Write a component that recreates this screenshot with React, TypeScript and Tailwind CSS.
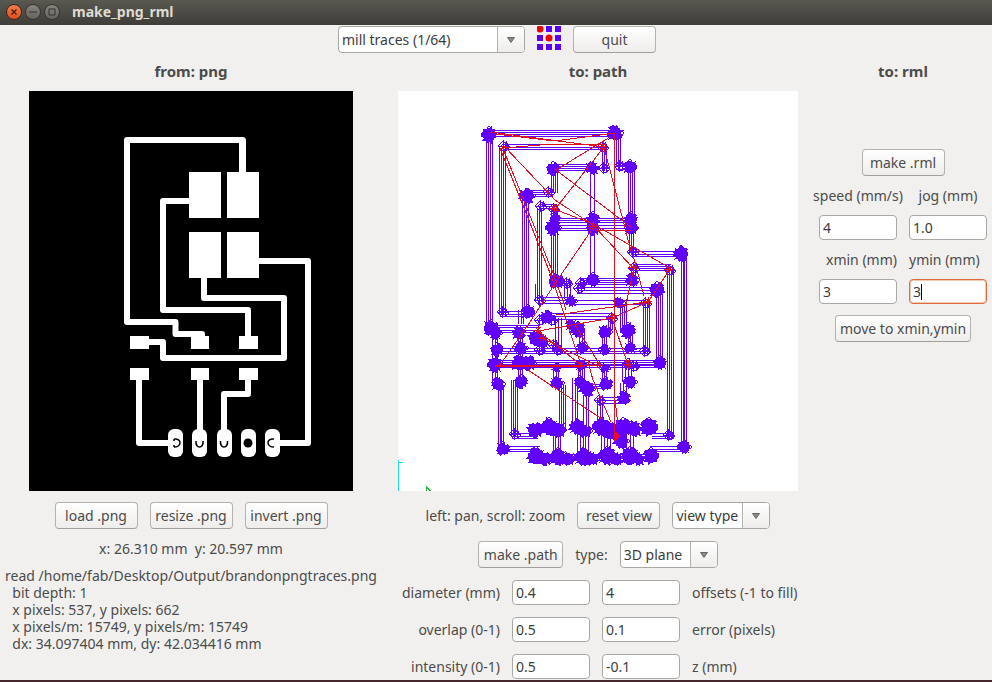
import React from "react";

type Bundle = [number, number, number, number, number];

/* vertical toolpath bundles: x start, x end, y start, y end, passes */
const vertical: Bundle[] = [
  [486.5, 492.5, 137, 325, 4], [499.5, 505.5, 148, 314, 4], [522.5, 528.5, 198, 310, 4],
  [537.5, 541.5, 208, 300, 3], [551.5, 557.5, 170, 193, 4], [551.5, 557.5, 208, 280, 4],
  [590.5, 594.5, 170, 280, 2], [628.5, 634.5, 168, 225, 4], [629.5, 633.5, 228, 255, 3],
  [614.5, 620.5, 135, 166, 4], [602.5, 606.5, 148, 171, 3], [681.5, 686.5, 255, 447, 4],
  [667.5, 673.5, 270, 438, 4], [656.5, 662.5, 290, 362, 4], [564.5, 570.5, 284, 299, 3],
  [643.5, 649.5, 300, 353, 4], [620.5, 626.5, 304, 330, 4], [608.5, 612.5, 318, 330, 3],
  [579.5, 584.5, 330, 348, 3], [602.5, 606.5, 330, 350, 3], [628.5, 632.5, 330, 346, 3],
  [492.5, 497.5, 325, 384, 3], [518.5, 523.5, 310, 324, 3], [518.5, 522.5, 335, 384, 3],
  [498.5, 503.5, 385, 448, 4], [511.5, 517.5, 380, 436, 4], [559.5, 565.5, 385, 430, 4],
  [572.5, 577.5, 378, 425, 3], [583.5, 588.5, 395, 432, 3], [597.5, 602.5, 398, 425, 3],
  [553.5, 558.5, 365, 382, 3], [578.5, 584.5, 365, 382, 4], [602.5, 606.5, 365, 385, 3],
  [622.5, 631.5, 363, 382, 4], [620.5, 626.5, 383, 396, 3], [631.5, 635.5, 264, 282, 3],
  [553.5, 560.5, 430, 455, 4], [577.5, 588.5, 430, 455, 5], [601.5, 610.5, 430, 455, 4],
  [626.5, 633.5, 430, 455, 3], [535.5, 541.5, 284, 302, 2], [555.5, 561.5, 318, 350, 3],
];

/* horizontal toolpath bundles: y start, y end, x start, x end, passes */
const horizontal: Bundle[] = [
  [130.5, 136.5, 489, 615, 4], [144.5, 149.5, 504, 604, 3], [164.5, 170.5, 554, 592, 4],
  [190.5, 196.5, 527, 553, 4], [204.5, 208.5, 541, 557, 3], [218.5, 222.5, 555, 632, 3],
  [225.5, 230.5, 555, 632, 3], [251.5, 256.5, 632, 682, 3], [264.5, 270.5, 633, 671, 4],
  [278.5, 284.5, 580, 632, 4], [287.5, 293.5, 577, 657, 3], [297.5, 303.5, 538, 572, 3],
  [300.5, 304.5, 572, 646, 2], [311.5, 316.5, 500, 530, 3], [313.5, 319.5, 550, 613, 3],
  [325.5, 332.5, 491, 540, 4], [348.5, 353.5, 495, 647, 3], [360.5, 367.5, 492, 660, 5],
  [397.5, 403.5, 600, 625, 3], [433.5, 438.5, 512, 538, 3], [446.5, 451.5, 503, 540, 3],
  [433.5, 438.5, 652, 674, 3], [446.5, 451.5, 650, 685, 3], [163.5, 169.5, 616, 630, 3],
  [384.5, 388.5, 586, 606, 3], [281.5, 285.5, 556, 572, 3], [454.5, 460.5, 532, 655, 4],
];

/* solid corners where passes pile up: x, y, radius */
const corners: [number, number, number][] = [
  [489, 135, 7], [615, 133, 7], [553, 169, 6], [592, 168, 6], [630, 167, 6], [527, 196, 7],
  [555, 219, 5], [553, 228, 7], [593, 219, 6], [593, 229, 6], [631, 219, 6], [631, 228, 6],
  [681, 254, 7], [556, 281, 7], [593, 280, 6], [632, 280, 6], [657, 290, 7], [571, 301, 5],
  [528, 312, 6], [547, 317, 6], [491, 328, 7], [495, 333, 6], [519, 333, 6], [536, 338, 7],
  [543, 343, 5], [571, 325, 5], [578, 330, 7], [605, 332, 6], [628, 331, 7], [619, 303, 5],
  [497, 350, 6], [521, 348, 6], [582, 348, 5], [605, 349, 4], [630, 348, 5], [495, 365, 7],
  [519, 363, 7], [528, 363, 7], [660, 363, 6], [581, 365, 5], [557, 368, 4], [605, 368, 4],
  [628, 364, 4], [498, 384, 6], [521, 382, 6], [557, 383, 6], [580, 382, 5], [587, 389, 7],
  [606, 384, 6], [630, 382, 6], [624, 398, 6], [535, 430, 7], [549, 427, 8], [558, 430, 7],
  [577, 427, 7], [585, 431, 6], [601, 427, 8], [611, 431, 8], [623, 427, 8], [634, 429, 7],
  [649, 427, 8], [621, 441, 7], [503, 449, 6], [684, 447, 6], [536, 456, 8], [545, 459, 6],
  [558, 457, 8], [568, 459, 6], [583, 457, 8], [592, 459, 6], [607, 456, 8], [616, 459, 6],
  [630, 456, 8], [638, 459, 6], [651, 456, 7],
];

const tips: [number, number][] = [
  [504, 146], [603, 147], [604, 168], [549, 192], [541, 206], [554, 209], [633, 252],
  [634, 268], [670, 270], [567, 283], [581, 283], [579, 288], [540, 300], [503, 312],
  [540, 320], [552, 320], [554, 345], [558, 350], [540, 350], [604, 350], [645, 351],
  [646, 303], [515, 434], [669, 435], [600, 400], [612, 318], [634, 366], [620, 166],
];

const travel = [
  "490,132 604,147", "495,134 555,141 615,133", "504,148 540,145 604,144", "500,148 552,278 581,365",
  "502,146 555,278 566,310", "504,146 555,200 593,225 633,268", "604,147 556,208", "610,137 556,170",
  "556,170 632,228", "604,148 610,170 632,255", "614,135 615,440", "554,209 593,224 670,268",
  "593,228 556,282 528,325 500,365", "670,269 648,302", "633,255 644,296", "634,268 626,304",
  "648,302 612,318 538,331", "648,302 556,315", "620,306 646,302", "612,318 627,362",
  "538,331 581,365", "540,337 598,366", "495,365 583,365", "495,366 583,366", "528,370 602,419",
  "583,365 600,365", "588,362 593,380 611,422", "615,400 618,425", "575,325 600,365", "596,230 632,230",
];

const hubs: [number, number][] = [
  [603, 146], [554, 208], [593, 226], [633, 267], [669, 269], [648, 301], [612, 317],
  [538, 330], [543, 338], [581, 365], [599, 365], [628, 364],
];

const at = (a: number, b: number, n: number, i: number) => Math.floor(a + ((b - a) * i) / (n - 1)) + 0.5;

const cornerPoints = (x: number, y: number, r: number, k: number) =>
  Array.from({ length: 24 }, (_, i) => {
    const angle = (i / 24) * Math.PI * 2;
    const tooth = i % 2 ? 1 : -0.6;
    const reach = r + tooth + [0.8, 0, 0, -0.8, 0, 1.6, 0][(i + k * 3) % 7];
    return `${(x + Math.cos(angle) * reach).toFixed(1)},${(y + Math.sin(angle) * reach).toFixed(1)}`;
  }).join(" ");

function ToolPath() {
  return (
    <svg viewBox="398 91 400 400" className="block h-[400px] w-[400px] bg-white" role="img" aria-label="tool path" shapeRendering="crispEdges">
      <g stroke="#6200f5" strokeWidth="1">
        {vertical.map(([a, b, c, d, n], k) =>
          Array.from({ length: n }, (_, i) => <line key={`${k}-${i}`} x1={at(a, b, n, i)} x2={at(a, b, n, i)} y1={c} y2={d} />)
        )}
        {horizontal.map(([a, b, c, d, n], k) =>
          Array.from({ length: n }, (_, i) => <line key={`${k}-${i}`} y1={at(a, b, n, i)} y2={at(a, b, n, i)} x1={c} x2={d} />)
        )}
      </g>
      <g fill="none" stroke="#6200f5" strokeWidth="1">
        {tips.map(([x, y]) => (
          <path key={`${x}-${y}`} d={`M${x - 6} ${y}l5 -5v10zM${x - 3} ${y}l4 -4l5 5l-5 4zM${x - 1} ${y - 5}l6 6M${x - 2} ${y + 3}l6 -6M${x + 2} ${y - 5}v10M${x - 5} ${y}h10`} />
        ))}
      </g>
      <g fill="#6200ff">
        {corners.map(([x, y, r], k) => (
          <polygon key={k} points={cornerPoints(x, y, r, k)} />
        ))}
      </g>
      <g fill="none" stroke="#6200ff" strokeWidth="1">
        {corners.map(([x, y, r], k) => (
          <path key={k} d={k % 2 ? `M${x - r} ${y - r + 1}L${x + r - 1} ${y + r}M${x + r} ${y - 2}l2 2l-2 2` : `M${x - r} ${y + r - 1}L${x + r} ${y - r + 2}M${x - 2} ${y - r}l2 -2l2 2`} />
        ))}
      </g>
      <g fill="none" stroke="#e01020" strokeWidth="1">
        {travel.map((points) => <polyline key={points} points={points} />)}
        {hubs.map(([x, y]) => (
          <path key={`${x}-${y}`} d={`M${x - 5} ${y}h9M${x} ${y - 4}v8M${x - 3} ${y - 3}l6 6M${x - 3} ${y + 3}l6 -6`} />
        ))}
        <path d="M614 431l6 5l-5 5z" fill="#ff0030" />
      </g>
      <path d="M398.500 491V459.500M398 462.500h5" fill="none" stroke="#20dfe8" />
      <path d="M426.500 491v-4l4 4M427 488l3 3" fill="none" stroke="#20c040" />
    </svg>
  );
}

function Board() {
  return (
    <svg viewBox="29 91 324 400" className="block h-[400px] w-[324px] bg-black" role="img" aria-label="png traces">
      <g fill="none" stroke="#fff" strokeWidth="6" strokeLinejoin="round">
        <path strokeWidth="7" strokeLinecap="round" d="M242.500 173V140.500" />
        <path d="M242.500 140H127V322H175.500V334H202V340" />
        <path d="M190 201H163V310H248V337" />
        <path d="M258 261H308V443H276" />
        <path d="M204 277V298H284V358H163V342H148" />
        <path d="M139 379V443H170" />
        <path d="M200 379V432" />
        <path d="M248 379V394H224V432" />
      </g>
      <g fill="#fff" shapeRendering="crispEdges">
        <path d="M189 172h32v46h-32zM227 172h32v46h-32zM189 232h32v46h-32zM227 232h32v46h-32z" />
        <path d="M130 336h19v13h-19zM191 336h18v13h-18zM239 336h19v13h-19zM130 368h19v12h-19zM191 368h18v12h-18zM239 368h19v12h-19z" />
      </g>
      <g fill="#fff">
        {[168, 192, 217, 241, 265].map((x) => <rect key={x} x={x} y="429" width="15" height="28" rx="6" />)}
      </g>
      <g fill="none" stroke="#000" strokeWidth="1.500">
        <path d="M174 439c8 -1 8 8 0 8M173 440h2M173 446h2" />
        <path d="M196 441c-1 8 8 8 7 0" />
        <path d="M220.500 441c-1 8 8 8 7 0" />
        <path d="M274 439c-8 -1 -8 8 0 8" />
      </g>
      <circle cx="248" cy="443" r="4.500" />
    </svg>
  );
}

function Logo() {
  return (
    <svg viewBox="0 0 24 24" className="h-6 w-6 shrink-0" aria-label="logo" role="img">
      <path fill="#5a00f5" d="M9 0h6v6H9zM18 0h6v6h-6zM0 9h6v6H0zM18 9h6v6h-6zM0 18h6v6H0zM9 18h6v6H9zM18 18h6v6h-6z" />
      <circle cx="3" cy="3" r="3.500" fill="#f00000" />
      <circle cx="12" cy="12" r="3.500" fill="#f00000" />
    </svg>
  );
}

function Button({ children, className = "min-w-[83px]" }: { children: React.ReactNode; className?: string }) {
  return (
    <button type="button" className={`h-[27px] whitespace-nowrap rounded border border-[#b4b2ae] border-b-[#a19f9b] bg-linear-to-b from-white to-[#eeedeb] text-center text-[#4c4c4c] ${className}`}>
      {children}
    </button>
  );
}

function Combo({ label, options, className = "w-[98px]" }: { label: string; options: string[]; className?: string }) {
  return (
    <span className={`relative inline-flex h-[27px] overflow-hidden rounded border border-[#aaa8a4] bg-white ${className}`}>
      <select aria-label={label} className="w-full appearance-none bg-transparent pl-[3px] text-[#3c3c3c] outline-none">
        {options.map((option) => <option key={option}>{option}</option>)}
      </select>
      <span className="pointer-events-none absolute inset-y-0 right-0 flex w-[27px] items-center justify-center border-l border-[#b4b2ae] bg-linear-to-b from-white to-[#eeedeb]">
        <svg viewBox="0 0 8 6" className="h-[6px] w-2"><path d="M0.500 0.500h7L4 5.500z" fill="#8a8a88" stroke="#666" /></svg>
      </span>
    </span>
  );
}

const field = "block h-[25px] w-[78px] rounded border bg-white px-[3px] text-[#3c3c3c] outline-none";

const heading = "pt-[10px] pb-[11px] text-[15px] leading-[17px] font-bold";

function Settings({ left, right, values }: { left: string; right: string; values: [string, string] }) {
  return (
    <div className="grid grid-cols-[103px_78px_78px_107px] items-center gap-3">
      <label htmlFor={left} className="text-right whitespace-nowrap">{left}</label>
      <input id={left} defaultValue={values[0]} className={`${field} border-[#aaa8a4]`} />
      <input id={right} defaultValue={values[1]} className={`${field} border-[#aaa8a4]`} />
      <label htmlFor={right} className="whitespace-nowrap">{right}</label>
    </div>
  );
}

const status = `read /home/fab/Desktop/Output/brandonpngtraces.png
  bit depth: 1
  x pixels: 537, y pixels: 662
  x pixels/m: 15749, y pixels/m: 15749
  dx: 34.097404 mm, dy: 42.034416 mm`;

export default function App() {
  return (
    <div className="flex min-h-screen flex-col bg-[#f1f0ee] font-['Noto_Sans',sans-serif] text-[14px] leading-[17px] text-[#4c4c4c]">
      <header className="flex h-[25px] items-center gap-[3px] bg-linear-to-b from-[#5a5950] to-[#3e3d38] pb-[2px] pl-[6px]">
        <button type="button" aria-label="close" className="flex h-4 w-4 items-center justify-center rounded-full border border-[#3a2a20] bg-linear-to-b from-[#f57c50] to-[#de4c18]">
          <svg viewBox="0 0 8 8" className="h-2 w-2"><path d="M1.500 1.500l5 5M6.500 1.500l-5 5" stroke="#4a1c08" strokeWidth="1.300" /></svg>
        </button>
        <button type="button" aria-label="minimize" className="flex h-4 w-4 items-center justify-center rounded-full border border-[#34332f] bg-linear-to-b from-[#87867e] to-[#65645d]">
          <svg viewBox="0 0 8 8" className="h-2 w-2"><path d="M0 4h8" stroke="#33322e" /></svg>
        </button>
        <button type="button" aria-label="maximize" className="flex h-4 w-4 items-center justify-center rounded-full border border-[#34332f] bg-linear-to-b from-[#87867e] to-[#65645d]">
          <svg viewBox="0 0 8 8" className="h-2 w-2"><path d="M1 1h6v6H1z" fill="none" stroke="#33322e" /></svg>
        </button>
        <h1 className="pl-[9px] text-[14px] font-bold text-[#dfdbd2]">make_png_rml</h1>
      </header>

      <div className="flex items-start justify-center gap-3 pt-px pl-[2px]">
        <Combo label="process" options={["mill traces (1/64)"]} className="w-[187px]" />
        <Logo />
        <Button>quit</Button>
      </div>

      <main className="grid grid-cols-[minmax(0,382fr)_minmax(0,432fr)_minmax(0,178fr)]">
        <section className="flex flex-col items-center">
          <h2 className={heading}>from: png</h2>
          <Board />
          <div className="mt-[11px] flex gap-3">
            <Button>load .png</Button>
            <Button>resize .png</Button>
            <Button>invert .png</Button>
          </div>
          <p className="mt-[11px] whitespace-pre">x: 26.310 mm  y: 20.597 mm</p>
          <p className="mt-[10px] whitespace-pre">{status}</p>
        </section>

        <section className="flex flex-col items-center">
          <h2 className={heading}>to: path</h2>
          <ToolPath />
          <div className="mt-[11px] flex items-center gap-3">
            <span className="whitespace-nowrap">left: pan, scroll: zoom</span>
            <Button>reset view</Button>
            <Combo label="view type" options={["view type"]} />
          </div>
          <div className="mt-3 flex items-center gap-3">
            <Button className="min-w-[85px]">make .path</Button>
            <span>type:</span>
            <Combo label="type" options={["3D plane"]} />
          </div>
          <div className="mt-3 flex flex-col gap-3">
            <Settings left="diameter (mm)" right="offsets (-1 to fill)" values={["0.4", "4"]} />
            <Settings left="overlap (0-1)" right="error (pixels)" values={["0.5", "0.1"]} />
            <Settings left="intensity (0-1)" right="z (mm)" values={["0.5", "-0.1"]} />
          </div>
        </section>

        <section className="flex flex-col items-center">
          <h2 className={heading}>to: rml</h2>
          <div className="mt-[58px] flex flex-col items-center gap-[11px]">
            <Button>make .rml</Button>
            <div className="grid grid-cols-[78px_78px] gap-x-3 gap-y-[11px]">
              <label htmlFor="speed" className="flex justify-center whitespace-nowrap">speed (mm/s)</label>
              <label htmlFor="jog" className="flex justify-center whitespace-nowrap">jog (mm)</label>
              <input id="speed" defaultValue="4" className={`${field} border-[#aaa8a4]`} />
              <input id="jog" defaultValue="1.0" className={`${field} border-[#aaa8a4]`} />
              <label htmlFor="xmin" className="text-right whitespace-nowrap">xmin (mm)</label>
              <label htmlFor="ymin" className="whitespace-nowrap">ymin (mm)</label>
              <input id="xmin" defaultValue="3" className={`${field} border-[#aaa8a4]`} />
              <span className="relative">
                <input id="ymin" defaultValue="3" className={`${field} border-[#dd6b3c] shadow-[inset_0_0_0_1px_#f5c9b0]`} />
                <span className="pointer-events-none absolute top-[5px] left-3 h-4 w-px bg-black" />
              </span>
            </div>
            <Button className="px-1">move to xmin,ymin</Button>
          </div>
        </section>
      </main>
      <footer className="mt-auto h-[2px] bg-[#46282c]" />
    </div>
  );
}
